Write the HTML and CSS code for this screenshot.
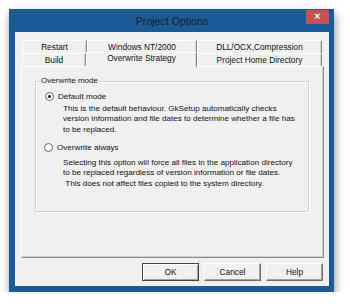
FILE: index.html
```html
<!DOCTYPE html>
<html lang="en">
<head>
    <meta charset="UTF-8">
    <title>Project Options</title>
    <link rel="stylesheet" href="styles.css">
</head>
<body>

    <div class="window">
        <div class="titlebar">
            <span></span>
            <span class="title">Project Options</span>
            <span class="close">&#x2715;</span>
        </div>

        <div class="client">
            <div class="tabs">
                <div class="tab-row">
                    <div class="tab w-restart">Restart</div>
                    <div class="tab w-nt">Windows NT/2000</div>
                    <div class="tab w-dll">DLL/OCX,Compression</div>
                </div>
                <div class="tab-row">
                    <div class="tab w-build">Build</div>
                    <div class="tab w-over selected">Overwrite Strategy</div>
                    <div class="tab w-dll">Project Home Directory</div>
                </div>
            </div>

            <div class="panel">
                <fieldset class="group">
                    <legend>Overwrite mode</legend>

                    <label class="radio">
                        <span class="dot checked"></span>
                        Default mode
                    </label>
                    <p class="desc">This is the default behaviour. GkSetup automatically checks<br>
                        version information and file dates to determine whether a file has<br>
                        to be replaced.</p>

                    <label class="radio second">
                        <span class="dot"></span>
                        Overwrite always
                    </label>
                    <p class="desc second">Selecting this option will force all files in the application directory<br>
                        to be replaced regardless of version information or file dates.<br>
                        &nbsp;This does not affect files copied to the system directory.</p>
                </fieldset>
            </div>

            <div class="buttons">
                <button class="default">OK</button>
                <button>Cancel</button>
                <button>Help</button>
            </div>
        </div>
    </div>

</body>
</html>
```

FILE: styles.css
```css
body {
    margin: 0;
    background-color: #fff;
    font-family: "Liberation Sans", Arial, sans-serif;
    font-size: 8.1px;
    color: #111;
}
.window {
    margin: 9px 0 0 9px;
    width: 325px;
    height: 283px;
    box-sizing: border-box;
    padding: 0 5px 6px 6px;
    background-color: #1c5b95;
    box-shadow: 1px 5px 9px rgba(0, 0, 0, 0.45);
    display: flex;
    flex-direction: column;
}
.titlebar {
    height: 23px;
    display: grid;
    grid-template-columns: 1fr auto 1fr;
    margin: 0 0 0 -6px;
}
.title {
    font-size: 10.6px;
    color: #16202e;
    line-height: 24px;
    padding-left: 6px;
}
.close {
    justify-self: end;
    margin-top: 1px;
    width: 23px;
    height: 14px;
    background-color: #c75050;
    color: #fff;
    font-size: 8px;
    font-weight: bold;
    text-align: center;
    line-height: 14px;
}
.client {
    flex: 1;
    background-color: #f0f0f0;
    padding: 8px 5px 5px 6px;
    display: flex;
    flex-direction: column;
}
.tabs {
    margin-left: 1px;
    width: 300px;
}
.tab-row {
    display: flex;
    align-items: flex-end;
    height: 13px;
}
.tab {
    height: 13px;
    box-sizing: border-box;
    border-top: 1px solid #fff;
    border-left: 1px solid #fff;
    border-right: 1px solid #8a8a8a;
    box-shadow: inset -1px 0 0 #cfcfcf;
    text-align: center;
    line-height: 12px;
    font-size: 8.3px;
}
.w-restart { width: 65px; }
.w-nt { width: 110px; }
.w-dll { width: 125px; }
.w-build { width: 64px; }
.w-over { width: 111px; }
.tab.selected {
    height: 15px;
    margin-bottom: -1px;
    line-height: 11px;
    background-color: #f0f0f0;
    position: relative;
    z-index: 1;
}
.panel {
    height: 192px;
    box-sizing: border-box;
    width: 303px;
    border-top: 1px solid #fff;
    border-left: 1px solid #fff;
    border-right: 1px solid #8a8a8a;
    border-bottom: 1px solid #8a8a8a;
    box-shadow: inset -1px -1px 0 #cfcfcf;
    padding: 9px 0 0 13px;
}
.group {
    margin: 0;
    width: 274px;
    height: 136px;
    box-sizing: border-box;
    border: 1px solid #d2d2d2;
    box-shadow: inset 1px 1px 0 #fff, 1px 1px 0 #fff;
    padding: 4px 0 0 9px;
}
.group legend {
    padding: 0 1px;
    margin-left: -5px;
    line-height: 10px;
    font-size: 8.1px;
}
.radio {
    display: flex;
    align-items: center;
    height: 10px;
    margin-top: 1px;
}
.radio.second {
    margin-top: 8px;
    margin-left: -1px;
}
.dot {
    width: 7px;
    height: 7px;
    border: 1px solid #6a6a6a;
    border-radius: 50%;
    background-color: #fff;
    margin-right: 4px;
    display: flex;
    align-items: center;
    justify-content: center;
}
.dot.checked::after {
    content: "";
    width: 3px;
    height: 3px;
    border-radius: 50%;
    background-color: #1a1a1a;
}
.desc {
    margin: 3px 0 0 18px;
    line-height: 10.3px;
}
.desc.second {
    margin-top: 5px;
    line-height: 10.6px;
}
.buttons {
    display: flex;
    justify-content: flex-end;
    gap: 5px;
    margin-top: 5px;
    padding-right: 1px;
}
.buttons button {
    width: 57px;
    height: 18px;
    padding: 0;
    font-family: "Liberation Sans", Arial, sans-serif;
    font-size: 8.3px;
    color: #111;
    background-color: #f0f0f0;
    border: 1px solid;
    border-color: #fff #6d6d6d #6d6d6d #fff;
    box-shadow: inset -1px -1px 0 #a0a0a0;
}
.buttons button.default {
    border-color: #444;
    box-shadow: inset 1px 1px 0 #fff, inset -1px -1px 0 #a0a0a0;
}
```
